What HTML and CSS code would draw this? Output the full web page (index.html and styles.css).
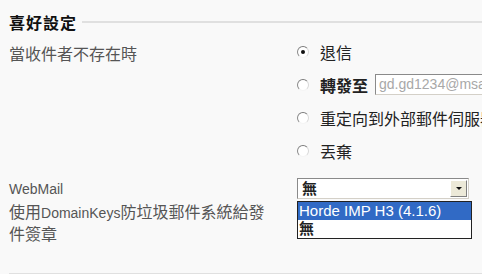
FILE: index.html
```html
<!DOCTYPE html>
<html lang="zh-Hant">
<head>
    <meta charset="UTF-8">
    <title>喜好設定</title>
    <link rel="stylesheet" href="styles.css">
</head>
<body>
    <section class="prefs">
        <div class="legend">
            <h2>喜好設定</h2>
            <span class="rule"></span>
        </div>

        <div class="row bounce">
            <div class="label tall">當收件者不存在時</div>
            <div class="radios">
                <label class="radio"><span class="dot checked"></span>退信</label>
                <label class="radio"><span class="dot"></span><b>轉發至</b><span class="text-input">gd.gd1234@msa</span></label>
                <label class="radio"><span class="dot"></span>重定向到外部郵件伺服器</label>
                <label class="radio"><span class="dot"></span>丟棄</label>
            </div>
        </div>

        <div class="row webmail">
            <div class="label"><span class="en">WebMail</span></div>
            <div class="select-wrap">
                <div class="select">
                    <span class="value">無</span>
                    <span class="arrow"></span>
                </div>
                <ul class="dropdown">
                    <li class="active"><span class="en">Horde IMP H3 (4.1.6)</span></li>
                    <li>無</li>
                </ul>
            </div>
        </div>

        <div class="row dk">
            <div class="label multi">使用<span class="en">DomainKeys</span>防垃圾郵件系統給發件簽章</div>
            <div></div>
        </div>

        <div class="bottom-rule"></div>
    </section>
</body>
</html>
```

FILE: styles.css
```css
body {
    margin: 0;
    background: #f9f9f9;
    font-family: "Liberation Sans", "Noto Sans CJK TC", sans-serif;
    font-size: 16px;
    color: #222;
    overflow: hidden;
}

.prefs {
    padding: 12px 0 0 9px;
}

.en {
    font-size: 14px;
}

.legend {
    display: flex;
    align-items: center;
    gap: 5px;
    height: 20px;
}

.legend h2 {
    margin: 0;
    font-size: 16px;
    font-weight: bold;
    color: #111;
    letter-spacing: 1px;
}

.legend .rule {
    flex: 1;
    height: 2px;
    background: #e0e0e0;
}

.row {
    display: grid;
    grid-template-columns: 288px 1fr;
}

.bounce {
    margin-top: 3px;
}

.label {
    color: #555;
    line-height: 21px;
}

.label.tall {
    line-height: 33px;
    padding-top: 3px;
}

.label.multi {
    line-height: 22px;
    width: 262px;
}

.radio {
    display: flex;
    align-items: center;
    height: 33px;
    white-space: nowrap;
}

.radio b {
    font-weight: 600;
}

.dot {
    width: 10px;
    height: 10px;
    border-radius: 50%;
    border: 1px solid;
    border-color: #7a7a7a #d8d8d8 #f4f4f4 #8a8a8a;
    background: #fff;
    margin-right: 11px;
    position: relative;
}

.dot.checked::after {
    content: "";
    position: absolute;
    left: 3px;
    top: 3px;
    width: 4px;
    height: 4px;
    border-radius: 50%;
    background: #111;
}

.text-input {
    display: inline-block;
    margin-left: 7px;
    width: 140px;
    height: 19px;
    line-height: 19px;
    border: 1px solid;
    border-color: #8a8a8a #d4d0c8 #d4d0c8 #8a8a8a;
    background: #fff;
    color: #a8a8a8;
    font-size: 14px;
    padding-left: 3px;
    overflow: hidden;
}

.webmail {
    margin-top: 11px;
}

.select-wrap {
    position: relative;
    width: 172px;
}

.select {
    display: flex;
    align-items: center;
    justify-content: space-between;
    height: 19px;
    border: 1px solid;
    border-color: #8a8a8a #d4d0c8 #d4d0c8 #8a8a8a;
    background: #fff;
    padding-left: 4px;
}

.select .value {
    font-size: 15px;
    font-weight: bold;
    line-height: 19px;
}

.select .arrow {
    position: relative;
    width: 17px;
    height: 17px;
    margin-right: 1px;
    background: #ece9d8;
    border: 1px solid;
    border-color: #fff #808080 #808080 #fff;
    box-sizing: border-box;
}

.select .arrow::after {
    content: "";
    position: absolute;
    left: 5px;
    top: 6px;
    border-left: 3px solid transparent;
    border-right: 3px solid transparent;
    border-top: 3px solid #111;
}

.dropdown {
    position: absolute;
    left: 0;
    top: 23px;
    width: 173px;
    margin: 0;
    padding: 0;
    list-style: none;
    background: #fff;
    border: 1px solid #222;
    z-index: 10;
}

.dropdown li {
    height: 18px;
    line-height: 18px;
    padding-left: 1px;
    font-weight: bold;
    font-size: 15px;
}

.dropdown li.active {
    background: #316ac5;
    color: #fff;
    font-weight: normal;
}

.dropdown li .en {
    font-size: 15px;
}

.dk {
    margin-top: 2px;
}

.bottom-rule {
    margin-top: 27px;
    height: 2px;
    background: #e0e0e0;
}
```
